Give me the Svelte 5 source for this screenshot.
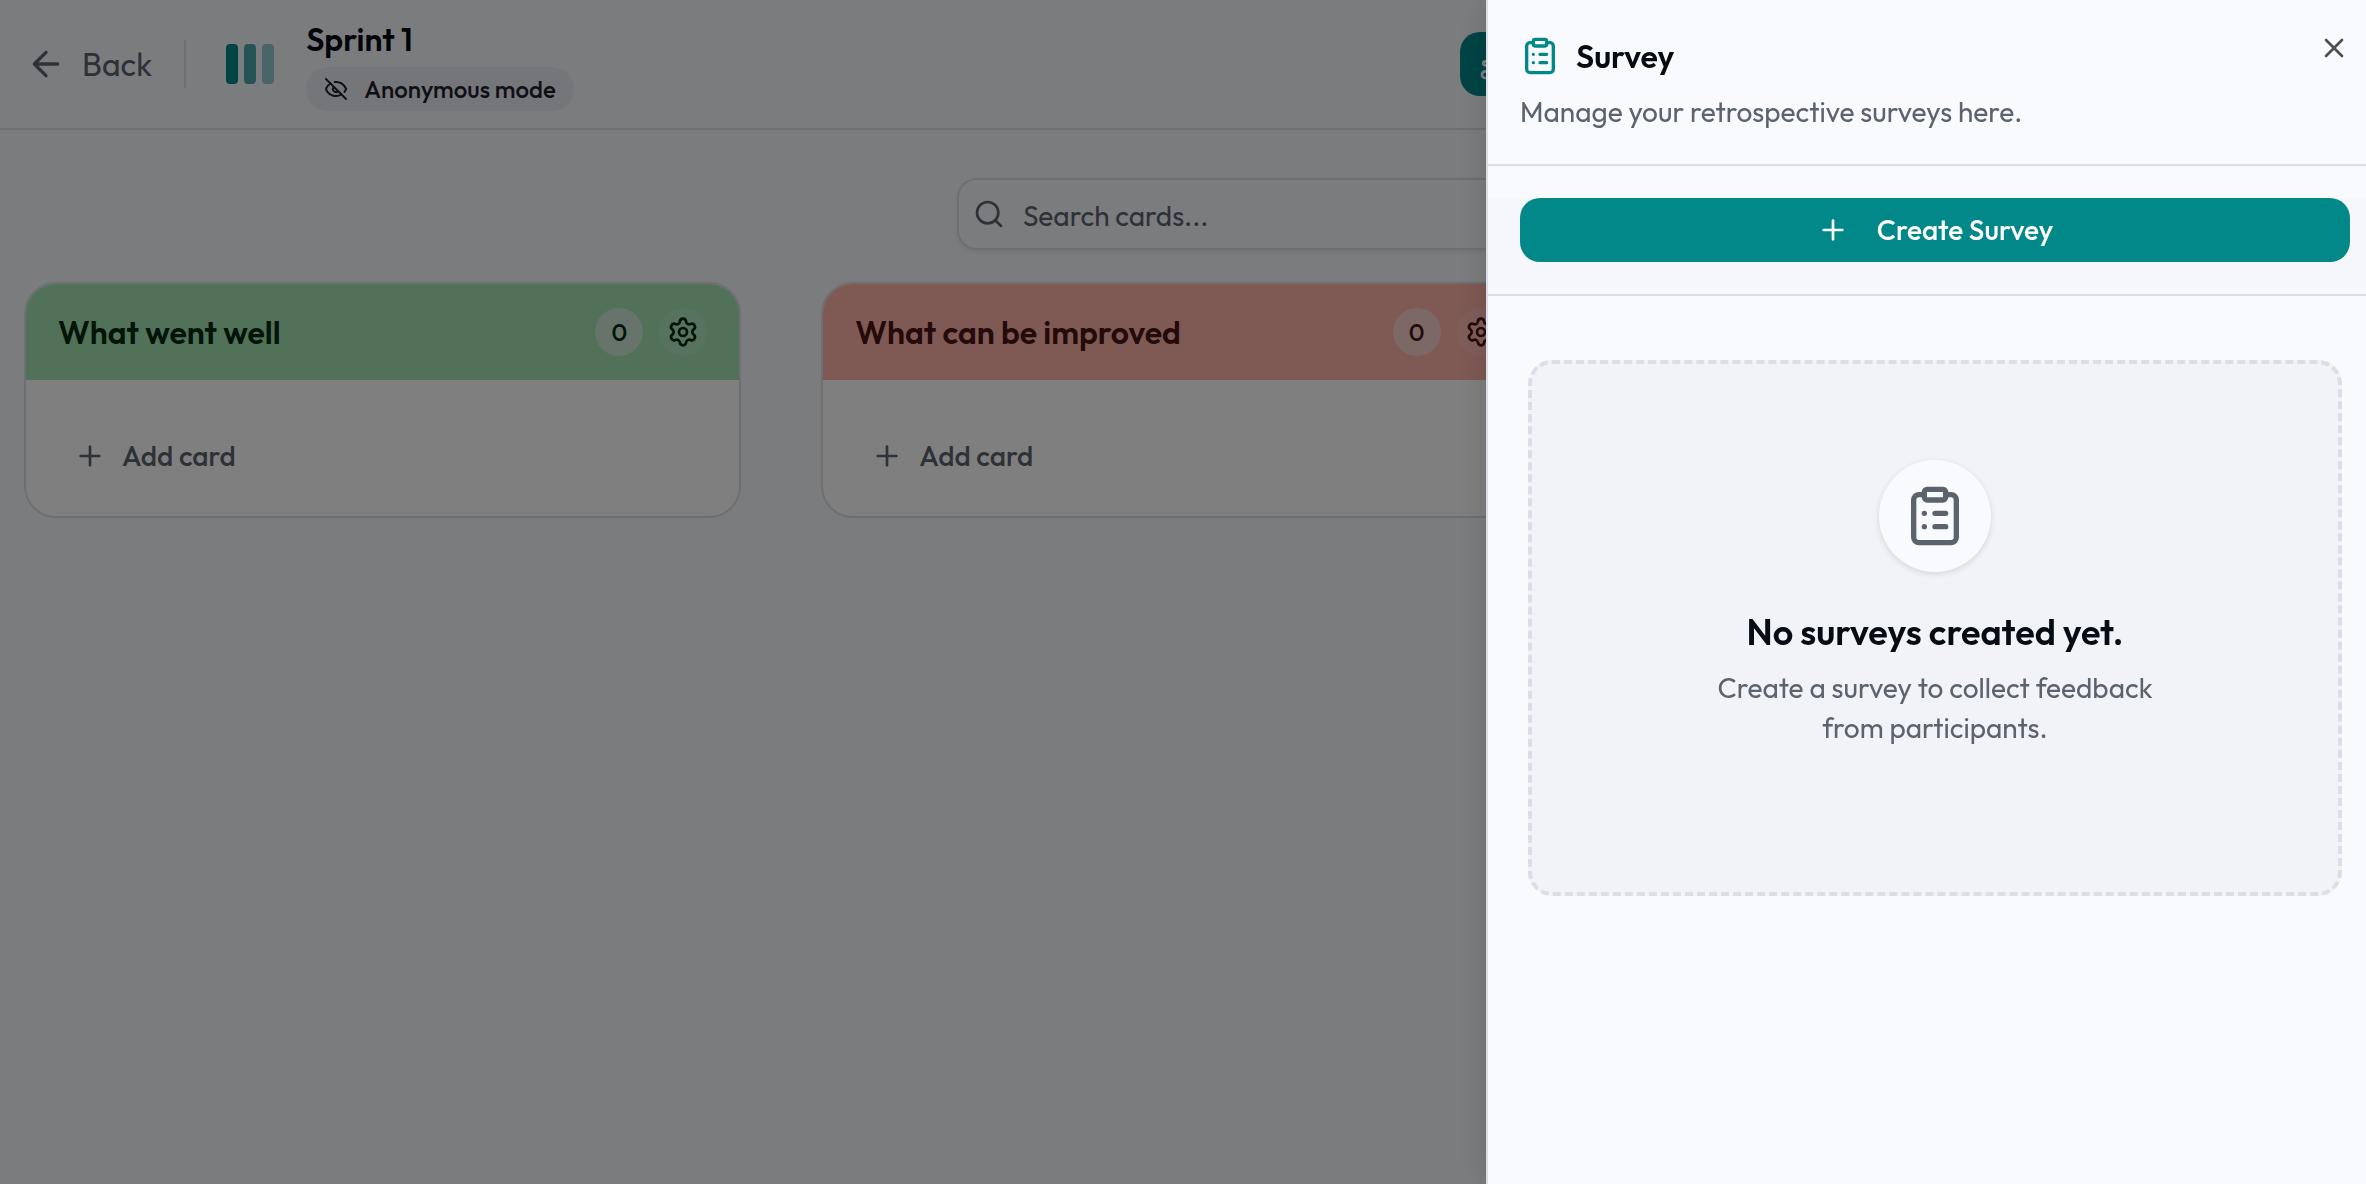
<script lang="ts">
	type Column = {
		title: string;
		count: number;
		tone: 'green' | 'red';
	};

	const columns: Column[] = [
		{ title: 'What went well', count: 0, tone: 'green' },
		{ title: 'What can be improved', count: 0, tone: 'red' }
	];

	let search = $state('');
	let open = $state(true);
</script>

{#snippet plus()}
	<svg class="icon" viewBox="0 0 24 24" aria-hidden="true">
		<path d="M5 12h14M12 5v14" />
	</svg>
{/snippet}

{#snippet clipboard()}
	<svg class="icon" viewBox="0 0 24 24" aria-hidden="true">
		<rect width="8" height="4" x="8" y="2" rx="1" ry="1" />
		<path d="M16 4h2a2 2 0 0 1 2 2v14a2 2 0 0 1-2 2H6a2 2 0 0 1-2-2V6a2 2 0 0 1 2-2h2" />
		<path d="M12 11h4M12 16h4M8 11h.01M8 16h.01" />
	</svg>
{/snippet}

<div class="page">
	<header class="topbar">
		<a class="back" href="#back">
			<svg class="icon" viewBox="0 0 24 24" aria-hidden="true">
				<path d="m12 19-7-7 7-7M19 12H5" />
			</svg>
			Back
		</a>
		<span class="divider"></span>
		<div class="logo"><i></i><i></i><i></i></div>
		<div class="title">
			<h1>Sprint 1</h1>
			<span class="pill">
				<svg class="icon" viewBox="0 0 24 24" aria-hidden="true">
					<path d="M10.733 5.076a10.744 10.744 0 0 1 11.205 6.575 1 1 0 0 1 0 .696 10.747 10.747 0 0 1-1.444 2.49" />
					<path d="M14.084 14.158a3 3 0 0 1-4.242-4.242" />
					<path d="M17.479 17.499a10.75 10.75 0 0 1-15.417-5.151 1 1 0 0 1 0-.696 10.75 10.75 0 0 1 4.446-5.143" />
					<path d="m2 2 20 20" />
				</svg>
				Anonymous mode
			</span>
		</div>
		<div class="actions">
			<button class="primary" aria-label="Participants">
				<svg class="icon" viewBox="0 0 24 24" aria-hidden="true">
					<circle cx="4" cy="20" r="2.5" />
					<circle cx="4" cy="11.5" r="1.5" />
				</svg>
			</button>
		</div>
	</header>

	<main>
		<div class="toolbar">
			<label class="search">
				<svg class="icon" viewBox="0 0 24 24" aria-hidden="true">
					<path d="m21 21-4.34-4.34" />
					<circle cx="11" cy="11" r="8" />
				</svg>
				<input type="text" placeholder="Search cards..." aria-label="Search cards" bind:value={search} />
			</label>
		</div>

		<div class="board">
			{#each columns as column (column.title)}
				<section class="column {column.tone}">
					<div class="column-head">
						<h2>{column.title}</h2>
						<span class="count">{column.count}</span>
						<button class="settings" aria-label="Column settings">
							<svg class="icon" viewBox="0 0 24 24" aria-hidden="true">
								<path
									d="M9.671 4.136a2.34 2.34 0 0 1 4.659 0 2.34 2.34 0 0 0 3.319 1.915 2.34 2.34 0 0 1 2.33 4.033 2.34 2.34 0 0 0 0 3.831 2.34 2.34 0 0 1-2.33 4.033 2.34 2.34 0 0 0-3.319 1.915 2.34 2.34 0 0 1-4.659 0 2.34 2.34 0 0 0-3.32-1.915 2.34 2.34 0 0 1-2.33-4.033 2.34 2.34 0 0 0 0-3.831A2.34 2.34 0 0 1 6.35 6.051a2.34 2.34 0 0 0 3.319-1.915"
								/>
								<circle cx="12" cy="12" r="3" />
							</svg>
						</button>
					</div>
					<div class="column-body">
						<button class="add">{@render plus()}Add card</button>
					</div>
				</section>
			{/each}
		</div>
	</main>
</div>

{#if open}
	<div class="overlay"></div>
	<aside class="sheet">
		<div class="sheet-head">
			<h2>{@render clipboard()}Survey</h2>
			<p>Manage your retrospective surveys here.</p>
			<button class="close" aria-label="Close" onclick={() => (open = false)}>
				<svg class="icon" viewBox="0 0 24 24" aria-hidden="true">
					<path d="M18 6 6 18M6 6l12 12" />
				</svg>
			</button>
		</div>
		<div class="sheet-actions">
			<button class="primary create">{@render plus()}Create Survey</button>
		</div>
		<div class="sheet-body">
			<div class="empty">
				<div class="badge">{@render clipboard()}</div>
				<h3>No surveys created yet.</h3>
				<p>Create a survey to collect feedback from participants.</p>
			</div>
		</div>
	</aside>
{/if}

<style>
	:global(body) {
		margin: 0;
		background: #f7f9fd;
		color: #060b14;
		font-family: Outfit, Lato, 'Liberation Sans', sans-serif;
		font-size: 28px;
		line-height: 40px;
	}

	h1,
	h2,
	h3,
	p {
		margin: 0;
	}

	h1,
	h2,
	h3 {
		font-weight: 600;
	}

	button,
	input {
		font: inherit;
		color: inherit;
		border: 0;
		padding: 0;
		background: none;
	}

	button {
		display: flex;
		align-items: center;
		cursor: pointer;
	}

	.icon {
		flex: none;
		width: 32px;
		height: 32px;
		fill: none;
		stroke: currentColor;
		stroke-width: 2;
		stroke-linecap: round;
		stroke-linejoin: round;
	}

	.page {
		min-height: 100vh;
	}

	.topbar {
		display: flex;
		align-items: center;
		height: 128px;
		padding: 0 32px 0 26px;
		border-bottom: 2px solid #dcdee6;
	}

	.back {
		display: flex;
		align-items: center;
		gap: 16px;
		min-width: 126px;
		color: #5c636e;
		font-size: 32px;
		text-decoration: none;
	}

	.back .icon {
		width: 40px;
		height: 40px;
	}

	.divider {
		width: 2px;
		height: 48px;
		margin: 0 40px 0 32px;
		background: #dcdee6;
	}

	.logo {
		display: flex;
		gap: 6px;
		margin-right: 32px;
	}

	.logo i {
		width: 12px;
		height: 40px;
		border-radius: 4px;
		background: #03888a;
	}

	.logo i:nth-child(2) {
		opacity: 0.7;
	}

	.logo i:nth-child(3) {
		opacity: 0.4;
	}

	.title {
		display: flex;
		flex-direction: column;
		align-items: flex-start;
		gap: 6px;
	}

	.title h1 {
		font-size: 32px;
		line-height: 44px;
	}

	.pill {
		display: flex;
		align-items: center;
		gap: 16px;
		height: 44px;
		padding: 0 18px;
		border-radius: 22px;
		background: #ebecf3;
		color: #1d212b;
		font-size: 24px;
		font-weight: 500;
	}

	.pill .icon {
		width: 24px;
		height: 24px;
	}

	.actions {
		display: flex;
		width: 874px;
		margin-left: auto;
	}

	.primary {
		height: 64px;
		padding: 0 20px;
		border-radius: 20px;
		background: #03888a;
		color: #fff;
		font-weight: 500;
	}

	.toolbar {
		display: flex;
		justify-content: flex-end;
		padding: 48px 32px 32px;
	}

	.search {
		display: flex;
		align-items: center;
		gap: 18px;
		box-sizing: border-box;
		width: 1377px;
		height: 72px;
		padding: 0 14px;
		border: 2px solid #dcdee6;
		border-radius: 20px;
		box-shadow: 0 2px 4px rgba(0, 0, 0, 0.08);
		color: #5c636e;
	}

	.search input {
		flex: 1;
		height: 42px;
		padding-top: 2px;
		outline: 0;
	}

	.search input::placeholder {
		color: inherit;
		opacity: 1;
	}

	.board {
		display: grid;
		grid-template-columns: repeat(3, 1fr);
		gap: 80px;
		padding: 0 30px 0 24px;
	}

	.column {
		overflow: hidden;
		border: 2px solid #dcdee6;
		border-radius: 32px;
		background: #fff;
	}

	.column-head {
		display: flex;
		align-items: center;
		gap: 16px;
		height: 96px;
		padding: 0 32px;
	}

	.green .column-head {
		background: #a3e2b2;
		color: #052810;
	}

	.red .column-head {
		background: #ffb3a8;
		color: #4a1414;
	}

	.column h2 {
		flex: 1;
		font-size: 32px;
	}

	.count,
	.settings {
		display: flex;
		align-items: center;
		justify-content: center;
		width: 48px;
		height: 48px;
		border-radius: 50%;
	}

	.count {
		background: rgba(248, 240, 250, 0.5);
		font-size: 24px;
		font-weight: 500;
	}

	.settings {
		background: rgba(248, 240, 250, 0.15);
	}

	.column-body {
		padding: 44px 32px 28px;
	}

	.add {
		gap: 16px;
		height: 64px;
		padding: 0 16px;
		color: #5c636e;
		font-weight: 500;
	}

	.overlay {
		position: fixed;
		inset: 0;
		background: rgba(0, 0, 0, 0.5);
	}

	.sheet {
		position: fixed;
		top: 0;
		right: 0;
		bottom: 0;
		box-sizing: border-box;
		width: 880px;
		border-left: 2px solid #dcdee6;
		background: #f8fafe;
		box-shadow: 0 0 30px rgba(0, 0, 0, 0.14);
	}

	.sheet-head {
		padding: 36px 32px 32px;
		border-bottom: 2px solid #dcdee6;
	}

	.sheet-head h2 {
		display: flex;
		align-items: center;
		gap: 16px;
		margin-bottom: 16px;
		font-size: 32px;
	}

	.sheet-head h2 .icon {
		width: 40px;
		height: 40px;
		color: #03888a;
	}

	.sheet-head p,
	.empty p {
		color: #5c636e;
	}

	.close {
		position: absolute;
		top: 32px;
		right: 16px;
		color: #4d4f54;
	}

	.sheet-actions {
		padding: 32px 16px 32px 32px;
		border-bottom: 2px solid #dcdee6;
		background: linear-gradient(#f8fafe 32px, #f6f7fb 32px);
	}

	.create {
		justify-content: center;
		gap: 28px;
		width: 100%;
	}

	.sheet-body {
		padding: 64px 24px 64px 40px;
	}

	.empty {
		display: flex;
		flex-direction: column;
		align-items: center;
		box-sizing: border-box;
		min-height: 536px;
		padding: 96px 32px;
		border: 4px dashed #dcdee6;
		border-radius: 24px;
		background: #f1f3f8;
		text-align: center;
	}

	.badge {
		display: flex;
		align-items: center;
		justify-content: center;
		width: 112px;
		height: 112px;
		margin-bottom: 36px;
		border-radius: 50%;
		background: #f8fafe;
		box-shadow: 0 2px 6px rgba(0, 0, 0, 0.12);
		color: #5c636e;
	}

	.badge .icon {
		width: 64px;
		height: 64px;
	}

	.empty h3 {
		margin-bottom: 12px;
		font-size: 36px;
		line-height: 48px;
	}

	.empty p {
		max-width: 480px;
	}
</style>
